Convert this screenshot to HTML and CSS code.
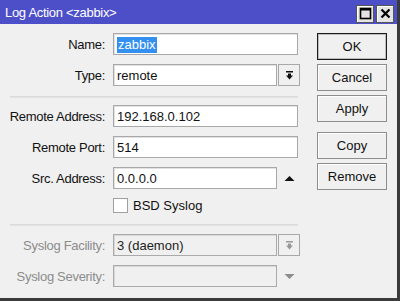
FILE: index.html
```html
<!DOCTYPE html>
<html>
<head>
<meta charset="utf-8">
<link rel="stylesheet" href="styles.css">
</head>
<body>
<div class="window">
  <div class="titlebar">
    <span class="title">Log Action &lt;zabbix&gt;</span>
    <div class="tb-buttons">
      <span class="tb-btn"><svg width="13" height="13" viewBox="0 0 13 13"><rect x="1.5" y="1.5" width="10" height="10" fill="none" stroke="#000" stroke-width="1.6"/><line x1="1.5" y1="2.5" x2="11.5" y2="2.5" stroke="#000" stroke-width="2"/></svg></span>
      <span class="tb-btn"><svg width="13" height="13" viewBox="0 0 13 13"><path d="M2.5 2.5 L10.5 10.5 M10.5 2.5 L2.5 10.5" stroke="#000" stroke-width="2.2"/></svg></span>
    </div>
  </div>
  <div class="body">
    <div class="form">
      <div class="row">
        <label class="lbl">Name:</label>
        <div class="field wide"><span class="sel">zabbix</span></div>
      </div>
      <div class="row">
        <label class="lbl">Type:</label>
        <div class="field">remote</div>
        <span class="dd"><svg width="9" height="9" viewBox="0 0 9 9"><rect x="1" y="0" width="7" height="1.5" fill="#111"/><path d="M3 2.5 H6 V4.5 H8 L4.5 8.5 L1 4.5 H3 Z" fill="#111"/></svg></span>
      </div>
      <div class="sep"></div>
      <div class="row">
        <label class="lbl">Remote Address:</label>
        <div class="field wide">192.168.0.102</div>
      </div>
      <div class="row">
        <label class="lbl">Remote Port:</label>
        <div class="field wide">514</div>
      </div>
      <div class="row">
        <label class="lbl">Src. Address:</label>
        <div class="field">0.0.0.0</div>
        <span class="arrow"><svg width="11" height="7" viewBox="0 0 11 7"><path d="M0.5 6 L5.5 1 L10.5 6 Z" fill="#111"/></svg></span>
      </div>
      <div class="row check-row">
        <span class="lbl"></span>
        <span class="checkbox"></span>
        <span class="check-label">BSD Syslog</span>
      </div>
      <div class="sep sep2"></div>
      <div class="row disabled">
        <label class="lbl">Syslog Facility:</label>
        <div class="field">3 (daemon)</div>
        <span class="dd"><svg width="9" height="9" viewBox="0 0 9 9"><rect x="1" y="0" width="7" height="1.5" fill="#999"/><path d="M3 2.5 H6 V4.5 H8 L4.5 8.5 L1 4.5 H3 Z" fill="#999"/></svg></span>
      </div>
      <div class="row disabled">
        <label class="lbl">Syslog Severity:</label>
        <div class="field"></div>
        <span class="arrow"><svg width="11" height="7" viewBox="0 0 11 7"><path d="M0.5 1 L10.5 1 L5.5 6 Z" fill="#8a8f8a"/></svg></span>
      </div>
    </div>
    <div class="buttons">
      <button class="btn default">OK</button>
      <button class="btn">Cancel</button>
      <button class="btn">Apply</button>
      <button class="btn gap">Copy</button>
      <button class="btn">Remove</button>
    </div>
  </div>
</div>
</body>
</html>
```
FILE: styles.css
```css
* { box-sizing: border-box; }
html, body { margin: 0; padding: 0; }
body {
  width: 400px;
  height: 301px;
  overflow: hidden;
  font-family: "Liberation Sans", Arial, sans-serif;
  font-size: 13px;
  color: #111;
  background: #f0f0f0;
}
.window {
  width: 400px;
  height: 301px;
  display: flex;
  flex-direction: column;
  background: #f0f0f0;
  border-right: 3px solid #3a3a3a;
  border-bottom: 3px solid #3a3a3a;
}
.titlebar {
  height: 24px;
  background: #4d4fc8;
  display: flex;
  align-items: center;
  justify-content: space-between;
  padding: 0 3px 0 5px;
}
.title {
  color: #fff;
  font-size: 13px;
  letter-spacing: -0.3px;
}
.tb-buttons { display: flex; gap: 2px; margin-top: 3px; }
.tb-btn {
  width: 18px;
  height: 18px;
  background: #e4e4e4;
  border: 1px solid #555;
  box-shadow: inset 1px 1px 0 #fff;
  display: flex;
  align-items: center;
  justify-content: center;
}
.body {
  display: flex;
  flex: 1;
}
.form {
  width: 317px;
  padding-top: 9px;
  display: flex;
  flex-direction: column;
}
.row {
  display: flex;
  align-items: center;
  height: 22px;
  margin-bottom: 9px;
}
.lbl {
  width: 105px;
  text-align: right;
  margin-right: 8px;
  flex: none;
  letter-spacing: -0.3px;
}
.field {
  width: 164px;
  height: 22px;
  background: #fff;
  border: 1px solid #a8a8a8;
  box-shadow: inset 1px 1px 0 #e2e2e2;
  padding: 2px 0 0 3px;
  line-height: 17px;
  white-space: nowrap;
}
.field.wide { width: 185px; }
.sel {
  background: #3390f0;
  color: #fff;
  padding: 0 1px;
  display: inline-block;
  line-height: 16px;
}
.dd {
  width: 22px;
  height: 22px;
  margin-left: 1px;
  border: 1px solid #a8a8a8;
  background: #f0f0f0;
  display: flex;
  align-items: center;
  justify-content: center;
}
.arrow {
  width: 22px;
  height: 22px;
  margin-left: 1px;
  display: flex;
  align-items: center;
  justify-content: center;
}
.sep {
  height: 2px;
  width: 288px;
  margin-left: 10px;
  background: #e2e2e2;
  border-top: 1px solid #dadada;
  margin-top: 1px;
  margin-bottom: 7px;
}
.sep2 { margin-top: 2px; margin-bottom: 8px; }
.check-row { height: 16px; margin-top: -1px; }
.checkbox {
  width: 15px;
  height: 15px;
  background: #fff;
  border: 1px solid #a0a0a0;
  flex: none;
}
.check-label { margin-left: 5px; }
.disabled .lbl { color: #8c8c8c; }
.disabled .field {
  background: #f0f0f0;
  border-color: #aaa;
  box-shadow: inset 1px 1px 0 #d8d8d8;
  color: #222;
}
.buttons {
  padding-top: 9px;
  display: flex;
  flex-direction: column;
  gap: 4px;
}
.btn {
  width: 70px;
  height: 27px;
  font-family: "Liberation Sans", Arial, sans-serif;
  font-size: 13px;
  color: #111;
  background: #f0f0f0;
  border: 1px solid #8d8d8d;
  box-shadow: inset 1px 1px 0 #fff;
  padding: 0;
  margin: 0;
}
.btn.default {
  border: 1px solid #1a1a1a;
  box-shadow: inset 0 0 0 1px #bdbdbd;
}
.btn.gap { margin-top: 6px; }
```
